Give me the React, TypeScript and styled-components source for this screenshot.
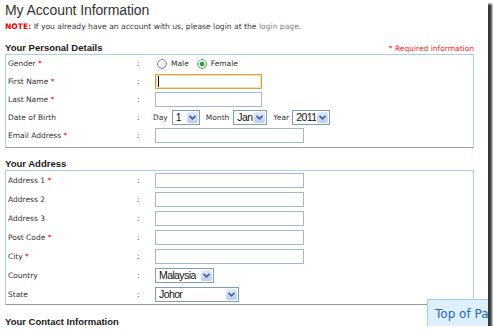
import styled, { createGlobalStyle } from "styled-components";

const GlobalStyle = createGlobalStyle`
  html, body {
    margin: 0;
    padding: 0;
    background: #fff;
  }
  body {
    font-family: "DejaVu Sans", Verdana, sans-serif;
  }
`;

const Frame = styled.div`
  position: relative;
  width: 488px;
  height: 326px;
  overflow: hidden;
  background: #fff;
  box-shadow: 4px 4px 2px rgba(0, 0, 0, 0.78);
`;

const Page = styled.div`
  padding: 1px 14px 0 5px;
`;

const Title = styled.h1`
  margin: 0;
  font: normal 14px/18px "Liberation Sans", Arial, sans-serif;
  letter-spacing: -0.1px;
  color: #333;
`;

const Note = styled.p`
  margin: 3px 0 0;
  font-size: 7.6px;
  line-height: 10px;
  color: #333;

  b {
    color: #e00;
  }
`;

const Link = styled.a`
  color: #808080;
  text-decoration: none;
`;

const SectionHead = styled.div<{ $gap: number }>`
  display: flex;
  justify-content: space-between;
  align-items: flex-end;
  height: 12px;
  margin-top: ${(p) => p.$gap}px;
`;

const Heading = styled.h2`
  margin: 0;
  font: bold 9.5px/12px "Liberation Sans", Arial, sans-serif;
  color: #1a1a1a;
`;

const Required = styled.span`
  font-size: 7.5px;
  line-height: 11px;
  color: #f22;
`;

const FieldBox = styled.div<{ $bottom: number }>`
  border: 1px solid #a6cdf5;
  border-bottom-color: #9a9a9a;
  padding-bottom: ${(p) => p.$bottom}px;
`;

const Row = styled.div<{ $h: number }>`
  display: grid;
  grid-template-columns: 128px 19px 1fr;
  align-items: center;
  height: ${(p) => p.$h}px;
  padding-left: 2px;
  font-size: 7.5px;
  color: #333;
`;

const Star = styled.span`
  color: #e00;
`;

const Colon = styled.span`
  padding-left: 1px;
`;

const Inline = styled.div`
  display: flex;
  align-items: center;
`;

const DobLine = styled(Inline)`
  margin-left: -2px;
`;

const Radio = styled.input`
  appearance: none;
  box-sizing: border-box;
  width: 10px;
  height: 10px;
  margin: 0 4px 0 2px;
  border: 1px solid #6f8db0;
  border-radius: 50%;
  background: linear-gradient(135deg, #ffffff 20%, #dcdcd4);

  &:checked {
    background: radial-gradient(circle, #23a823 0 1.8px, #8ad68a 2.3px, transparent 2.8px),
      linear-gradient(135deg, #ffffff 20%, #dcdcd4);
  }
`;

const RadioText = styled.span`
  margin-right: 6px;
`;

const FieldWrap = styled.span`
  position: relative;
  display: inline-block;
  line-height: 0;
`;

const TextBox = styled.input<{ $w: number; $focus?: boolean }>`
  box-sizing: border-box;
  width: ${(p) => p.$w}px;
  height: 15px;
  margin: 0;
  padding: 0 2px;
  border: 1px solid ${(p) => (p.$focus ? "#d9a443" : "#a4b7d0")};
  box-shadow: ${(p) => (p.$focus ? "inset 0 0 0 1px #f5dfae" : "none")};
  background: #fff;
  outline: none;
  font: 11px "Liberation Sans", Arial, sans-serif;
`;

const Caret = styled.span`
  position: absolute;
  left: 3px;
  top: 2px;
  width: 1px;
  height: 11px;
  background: #000;
`;

const SmallText = styled.span<{ $after: number }>`
  margin-right: ${(p) => p.$after}px;
`;

const SelectWrap = styled.span<{ $w: number; $after?: number }>`
  position: relative;
  display: inline-block;
  width: ${(p) => p.$w}px;
  height: 15px;
  margin-right: ${(p) => p.$after ?? 0}px;
`;

const Select = styled.select`
  appearance: none;
  box-sizing: border-box;
  width: 100%;
  height: 100%;
  margin: 0;
  padding: 0 13px 0 3px;
  border: 1px solid #7f9db9;
  border-radius: 0;
  background: #fff;
  color: #111;
  outline: none;
  font: 10.5px/13px "Liberation Sans", Arial, sans-serif;
  letter-spacing: -0.6px;
`;

const Arrow = styled.span`
  position: absolute;
  top: 2px;
  right: 2px;
  bottom: 2px;
  width: 11px;
  display: flex;
  align-items: center;
  justify-content: center;
  border-radius: 2px;
  background: linear-gradient(#e2eafe, #b9cdf8);
  pointer-events: none;
`;

const TopButton = styled.button`
  position: absolute;
  left: 427px;
  top: 299px;
  height: 30px;
  padding: 0 7px;
  border: 1px solid #9dcbf0;
  background: #dff0fd;
  color: #2467b8;
  font: 12px/28px "DejaVu Sans", Verdana, sans-serif;
  white-space: nowrap;
  text-align: left;
`;

const Chevron = () => (
  <svg width="9" height="7" viewBox="0 0 9 7">
    <path d="M1.5 1.8 L4.5 4.8 L7.5 1.8" fill="none" stroke="#4c5f86" strokeWidth="1.7" />
  </svg>
);

const Dropdown = ({ w, value, after }: { w: number; value: string; after?: number }) => (
  <SelectWrap $w={w} $after={after}>
    <Select defaultValue={value}>
      <option>{value}</option>
    </Select>
    <Arrow>
      <Chevron />
    </Arrow>
  </SelectWrap>
);

const Field = ({ label, req, h = 18, children }: { label: string; req?: boolean; h?: number; children: React.ReactNode }) => (
  <Row $h={h}>
    <span>
      {label}
      {req && <Star> *</Star>}
    </span>
    <Colon>:</Colon>
    <Inline>{children}</Inline>
  </Row>
);

const addressFields: { label: string; req?: boolean }[] = [
  { label: "Address 1", req: true },
  { label: "Address 2" },
  { label: "Address 3" },
  { label: "Post Code", req: true },
  { label: "City", req: true },
];

export default function App() {
  return (
    <>
      <GlobalStyle />
      <Frame>
        <Page>
          <Title>My Account Information</Title>
          <Note>
            <b>NOTE:</b> If you already have an account with us, please login at the <Link>login page</Link>.
          </Note>

          <SectionHead $gap={10}>
            <Heading>Your Personal Details</Heading>
            <Required>* Required information</Required>
          </SectionHead>
          <FieldBox $bottom={3}>
            <Field label="Gender" req h={17}>
              <Radio type="radio" name="gender" />
              <RadioText>Male</RadioText>
              <Radio type="radio" name="gender" defaultChecked />
              <RadioText>Female</RadioText>
            </Field>
            <Field label="First Name" req>
              <FieldWrap>
                <TextBox $w={107} $focus />
                <Caret />
              </FieldWrap>
            </Field>
            <Field label="Last Name" req>
              <TextBox $w={107} />
            </Field>
            <Field label="Date of Birth">
              <DobLine>
                <SmallText $after={4}>Day</SmallText>
                <Dropdown w={28} value="1" after={6} />
                <SmallText $after={4}>Month</SmallText>
                <Dropdown w={34} value="Jan" after={6} />
                <SmallText $after={3}>Year</SmallText>
                <Dropdown w={38} value="2011" />
              </DobLine>
            </Field>
            <Field label="Email Address" req>
              <TextBox $w={149} />
            </Field>
          </FieldBox>

          <SectionHead $gap={10}>
            <Heading>Your Address</Heading>
          </SectionHead>
          <FieldBox $bottom={0}>
            {addressFields.map((f) => (
              <Field key={f.label} label={f.label} req={f.req} h={19}>
                <TextBox $w={149} />
              </Field>
            ))}
            <Field label="Country" h={19}>
              <Dropdown w={59} value="Malaysia" />
            </Field>
            <Field label="State" h={19}>
              <Dropdown w={84} value="Johor" />
            </Field>
          </FieldBox>

          <SectionHead $gap={11}>
            <Heading>Your Contact Information</Heading>
          </SectionHead>
        </Page>
        <TopButton type="button">Top of Page</TopButton>
      </Frame>
    </>
  );
}
